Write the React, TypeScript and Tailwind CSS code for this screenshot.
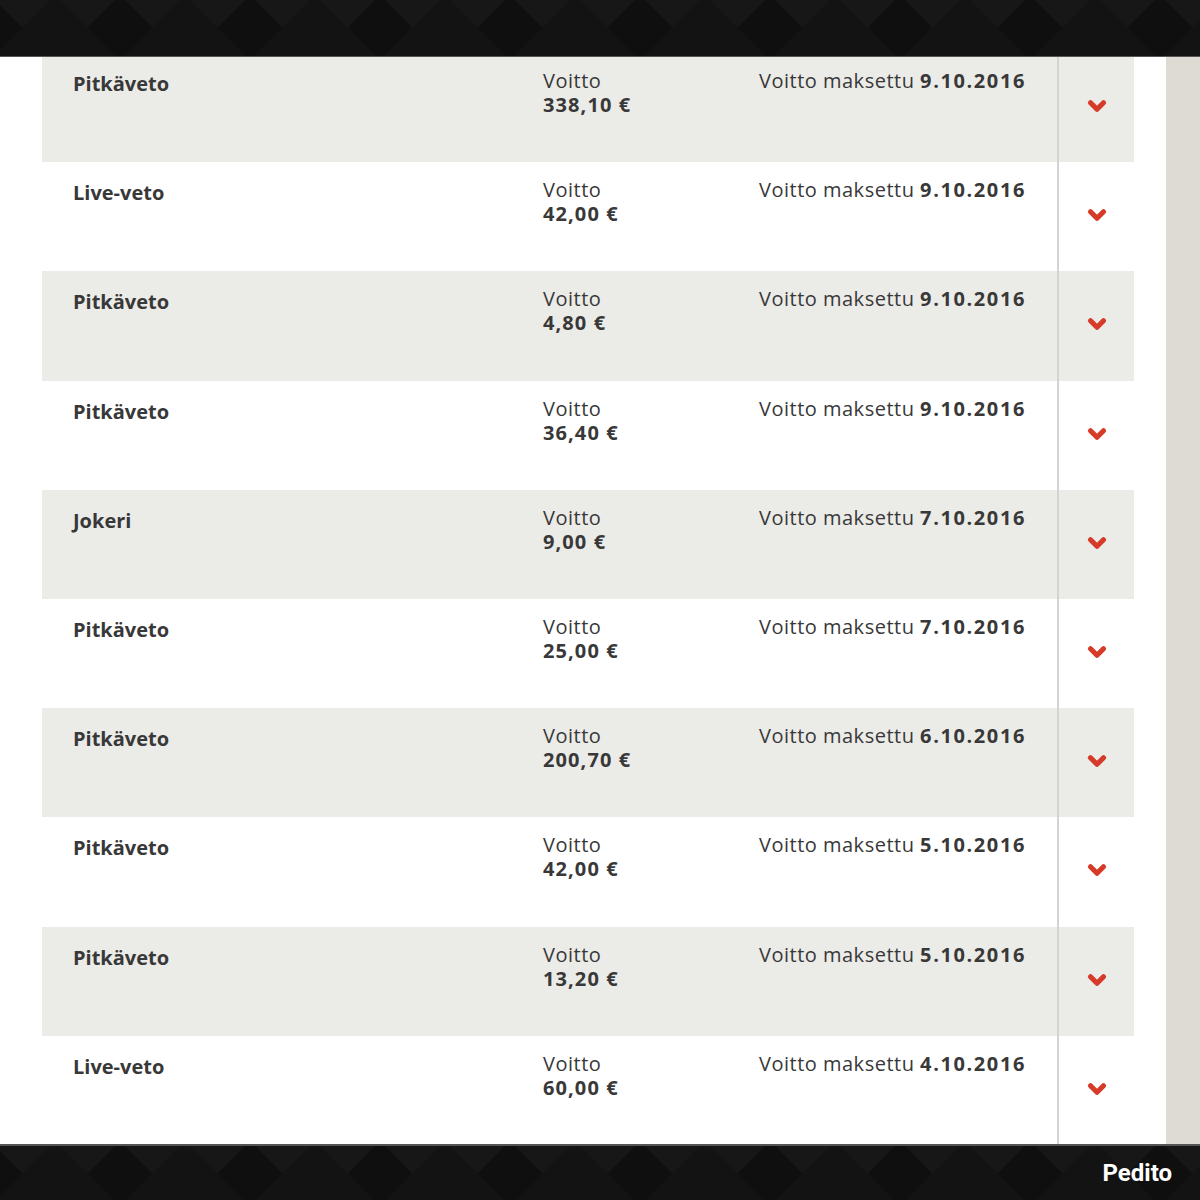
import { ChevronDown } from 'lucide-react';

const rows = [
  { name: 'Pitkäveto', amount: '338,10 €', date: '9.10.2016' },
  { name: 'Live-veto', amount: '42,00 €', date: '9.10.2016' },
  { name: 'Pitkäveto', amount: '4,80 €', date: '9.10.2016' },
  { name: 'Pitkäveto', amount: '36,40 €', date: '9.10.2016' },
  { name: 'Jokeri', amount: '9,00 €', date: '7.10.2016' },
  { name: 'Pitkäveto', amount: '25,00 €', date: '7.10.2016' },
  { name: 'Pitkäveto', amount: '200,70 €', date: '6.10.2016' },
  { name: 'Pitkäveto', amount: '42,00 €', date: '5.10.2016' },
  { name: 'Pitkäveto', amount: '13,20 €', date: '5.10.2016' },
  { name: 'Live-veto', amount: '60,00 €', date: '4.10.2016' },
];

function DiamondBg({ id }: { id: string }) {
  return (
    <svg className="absolute inset-0 w-full h-full" preserveAspectRatio="none">
      <defs>
        <pattern id={id} width="130" height="130" patternUnits="userSpaceOnUse" x="-10" y="-70">
          <rect width="130" height="130" fill="#0f0f0f" />
          <path d="M65 0 L130 65 L65 130 L0 65 Z" fill="#171717" />
          <path d="M65 65 L130 130 L0 130 Z" fill="#131313" />
        </pattern>
      </defs>
      <rect width="100%" height="100%" fill={`url(#${id})`} />
    </svg>
  );
}

export default function App() {
  return (
    <div className="w-[1200px] h-[1200px] flex flex-col bg-white overflow-hidden" style={{ fontFamily: '"Open Sans", "Noto Sans", sans-serif' }}>
      <header className="relative z-10 h-[57px] shrink-0 border-b border-[#555] overflow-hidden">
        <DiamondBg id="top" />
      </header>

      <div className="flex-1 flex min-h-0">
        <div className="w-[42px] shrink-0" />
        <div className="w-[1092px] shrink-0 -mt-[4px]">
          {rows.map((r, i) => (
            <div
              key={i}
              className={`h-[109.2px] flex text-[#383838] text-[20px] leading-[24px] ${i % 2 === 0 ? 'bg-[#ebebe8]' : 'bg-white'}`}
            >
              <div className="w-[501px] pl-[31px] pt-[19px] font-bold">{r.name}</div>
              <div className="w-[216px] pt-[16px]">
                <div className="tracking-[0.5px]">Voitto</div>
                <div className="font-bold tracking-[1.1px]">{r.amount}</div>
              </div>
              <div className="w-[298px] pt-[16px] whitespace-nowrap">
                <span className="tracking-[0.5px]">Voitto maksettu </span>
                <span className="font-bold tracking-[1.6px]">{r.date}</span>
              </div>
              <div className="flex-1 border-l-2 border-[#d3d3d3] flex justify-center pt-[40px]">
                <ChevronDown className="w-[26px] h-[26px] text-[#d63a28]" strokeWidth={4.8} />
              </div>
            </div>
          ))}
        </div>
        <div className="w-[32px] shrink-0" />
        <div className="flex-1 bg-[#dedbd5]" />
      </div>

      <footer className="relative z-10 h-[56px] shrink-0 border-t-2 border-[#555] overflow-hidden flex items-center justify-end pr-[28px]">
        <DiamondBg id="bottom" />
        <span className="relative text-white font-bold text-[24px]" style={{ fontFamily: 'Roboto, sans-serif' }}>Pedito</span>
      </footer>
    </div>
  );
}
